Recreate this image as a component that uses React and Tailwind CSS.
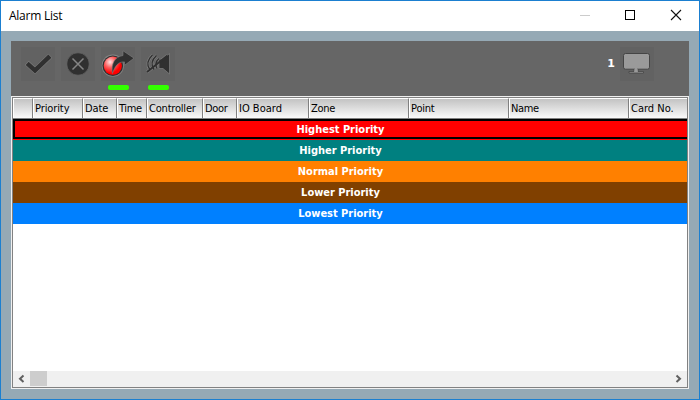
import React from 'react';

const columns = [
  { label: '', width: 'w-[20px]', track: '' },
  { label: 'Priority', width: 'w-[50px]', track: 'tracking-[-0.1px]' },
  { label: 'Date', width: 'w-[34px]', track: 'tracking-[-0.1px]' },
  { label: 'Time', width: 'w-[30px]', track: 'tracking-[-0.4px]' },
  { label: 'Controller', width: 'w-[56px]', track: 'tracking-[-0.2px]' },
  { label: 'Door', width: 'w-[34px]', track: 'tracking-[-0.3px]' },
  { label: 'IO Board', width: 'w-[72px]', track: 'tracking-[0px]' },
  { label: 'Zone', width: 'w-[100px]', track: 'tracking-[-0.3px]' },
  { label: 'Point', width: 'w-[100px]', track: 'tracking-[-0.2px]' },
  { label: 'Name', width: 'w-[120px]', track: 'tracking-[-0.4px]' },
  { label: 'Card No.', width: 'w-[58px]', track: 'tracking-[0px]' },
];

const rows = [
  { label: 'Highest Priority', color: 'bg-[#ff0000]' },
  { label: 'Higher Priority', color: 'bg-[#008080]' },
  { label: 'Normal Priority', color: 'bg-[#ff8000]' },
  { label: 'Lower Priority', color: 'bg-[#804000]' },
  { label: 'Lowest Priority', color: 'bg-[#0080ff]' },
];

function Tool({ children, active }) {
  return (
    <div className="flex h-[43px] w-[34px] shrink-0 flex-col justify-between">
      <div className="h-[34px] w-[34px] bg-[#626262]">{children}</div>
      {active && <div className="ml-[7px] h-[5px] w-[21px] shrink-0 rounded-[2px] bg-[#33ff00]" />}
    </div>
  );
}

function CheckIcon() {
  return (
    <svg width="34" height="34" viewBox="0 0 34 34">
      <path d="M7.8 17.8 14 23.4 27.3 10.6" fill="none" stroke="#7c7c7c" strokeWidth="5.6" strokeLinecap="square" />
      <path d="M7.8 17.8 14 23.4 27.3 10.6" fill="none" stroke="#303030" strokeWidth="4.4" strokeLinecap="square" />
    </svg>
  );
}

function CancelIcon() {
  return (
    <svg width="34" height="34" viewBox="0 0 34 34">
      <circle cx="17" cy="17" r="11.2" fill="#303030" stroke="#6c6c6c" strokeWidth="0.6" />
      <path d="M11.5 11.5 22.5 22.5M22.5 11.5 11.5 22.5" fill="none" stroke="#858585" strokeWidth="1.5" />
    </svg>
  );
}

function ForwardIcon() {
  return (
    <svg width="34" height="34" viewBox="0 0 34 34">
      <defs>
        <radialGradient id="ball" cx="0.35" cy="0.3" r="0.6">
          <stop offset="0" stopColor="#ffe4e4" />
          <stop offset="0.5" stopColor="#ff6060" />
          <stop offset="1" stopColor="#ff0000" />
        </radialGradient>
      </defs>
      <circle cx="11.8" cy="18.7" r="11.1" fill="#858585" />
      <circle cx="11.8" cy="18.7" r="10.3" fill="#303030" />
      <circle cx="11.8" cy="18.7" r="9.1" fill="url(#ball)" />
      <path d="M11.4 26.5C10 17 13.5 9.8 22 8.5V3.8L33 11.2 23.5 18.3V14.9C17 14.5 14 19 11.4 26.5Z" fill="#303030" stroke="#808080" strokeWidth="0.6" />
    </svg>
  );
}

function MuteIcon() {
  return (
    <svg width="34" height="34" viewBox="0 0 34 34">
      <g fill="none" stroke="#808080" strokeWidth="2.6">
        <path d="M11.5 8Q3.5 15.5 9 23M15.5 8.5Q8 15.5 13 22.5M18 11.5Q13 16 16 21.5" />
        <path d="M6 25 26.5 8.5" strokeWidth="3" />
      </g>
      <path d="M18 12.2H22L28.5 6.5V27L22 21.5H18Z" fill="#303030" stroke="#808080" strokeWidth="0.7" />
      <g fill="none" stroke="#303030" strokeWidth="1.4">
        <path d="M11.5 8Q3.5 15.5 9 23M15.5 8.5Q8 15.5 13 22.5M18 11.5Q13 16 16 21.5" />
        <path d="M6 25 26.5 8.5" strokeWidth="2" />
      </g>
    </svg>
  );
}

function MonitorIcon() {
  return (
    <svg width="34" height="34" viewBox="0 0 34 34">
      <rect x="3.5" y="6.5" width="26" height="15.7" rx="2" fill="#9a9a9a" stroke="#454545" />
      <path d="M14 22V24.5H9V26H23.5V24.5H18V22Z" fill="#9a9a9a" stroke="#454545" strokeWidth="0.8" />
      <path d="M14.5 21H17.5V25H14.5Z" fill="#9a9a9a" />
    </svg>
  );
}

export default function App() {
  return (
    <div className="flex h-[400px] w-[700px] flex-col overflow-hidden border border-[#1b7fd0] bg-[#95a9b5]">
      <header className="flex h-[30px] shrink-0 items-center justify-between bg-white">
        <h1 className="pl-2 font-['Open_Sans',sans-serif] text-[12px] leading-[28px] tracking-[-0.25px] text-black">Alarm List</h1>
        <svg width="138" height="30" viewBox="0 0 138 30" fill="none" shapeRendering="crispEdges">
          <path d="M19 14.5H29" stroke="#cccccc" />
          <rect x="64.5" y="9.5" width="9" height="9" stroke="#000000" />
          <path d="M110 9 120 19M120 9 110 19" stroke="#111111" strokeWidth="1.1" shapeRendering="auto" />
        </svg>
      </header>

      <main className="mx-[10px] mt-[10px] flex h-[348px] flex-col">
        <div className="flex h-[55px] shrink-0 items-start bg-[#666666] pt-[6px] pl-[10px]">
          <div className="flex gap-[6px]">
            <Tool><CheckIcon /></Tool>
            <Tool><CancelIcon /></Tool>
            <Tool active><ForwardIcon /></Tool>
            <Tool active><MuteIcon /></Tool>
          </div>
          <div className="mr-[35px] ml-auto flex items-start">
            <span className="mr-[5px] font-['DejaVu_Sans',sans-serif] text-[11px] leading-[33px] font-bold text-white">1</span>
            <Tool><MonitorIcon /></Tool>
          </div>
        </div>

        <section className="flex min-h-0 flex-1 flex-col border border-[#f0f0f0] font-['DejaVu_Sans_Condensed','DejaVu_Sans',sans-serif] text-[11px]">
          <div className="flex min-h-0 flex-1 flex-col border border-[#828282] bg-white">
            <div className="flex h-[21px] shrink-0 overflow-hidden border-b border-[#808080]">
              {columns.map((c) => (
                <div key={c.label} className={`${c.width} ${c.track} shrink-0 border-t border-r border-l border-t-white border-r-[#808080] border-l-white bg-linear-to-b from-[#c3c3c3] to-[#fafafa] pl-px leading-[19px] whitespace-nowrap text-black last:border-r-0`}>
                  {c.label}
                </div>
              ))}
            </div>
            {rows.map((r, i) => (
              <div key={r.label} className={`${r.color} h-[21px] shrink-0`}>
                <div className={`h-[20px] pr-[21px] text-center font-bold tracking-[-0.02px] text-white ${i === 0 ? 'border-y-2 border-l-2 border-black leading-[18px]' : 'pl-[2px] leading-[22px]'}`}>
                  {r.label}
                </div>
              </div>
            ))}
            <div className="mt-auto flex h-[16px] shrink-0 bg-[#f0f0f0]">
              <svg width="17" height="16" viewBox="0 0 17 16" fill="none">
                <path d="M10.5 4.5 7 7.7 10.5 11" stroke="#606060" strokeWidth="2" />
              </svg>
              <div className="h-[15px] w-[17px] bg-[#cdcdcd]" />
              <svg className="ml-auto" width="17" height="16" viewBox="0 0 17 16" fill="none">
                <path d="M6.5 4.5 10 7.7 6.5 11" stroke="#606060" strokeWidth="2" />
              </svg>
            </div>
          </div>
        </section>
      </main>
    </div>
  );
}
